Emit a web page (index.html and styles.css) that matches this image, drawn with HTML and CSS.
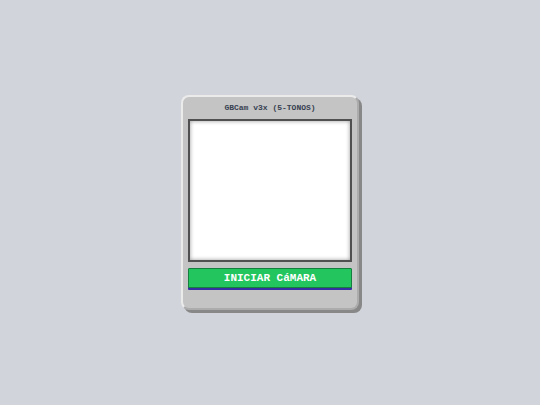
FILE: index.html
```html
<!DOCTYPE html>
<html lang="es">
<head>
    <meta charset="utf-8">
    <meta name="viewport" content="width=device-width, initial-scale=1.0">
    <title>GBCam</title>
    <link rel="stylesheet" href="styles.css">
</head>
<body>
<main class="console">
    <h1 class="title">GBCam v3x (5-TONOS)</h1>
    <canvas class="screen" width="160" height="139"></canvas>
    <button class="btn-start" type="button">INICIAR CáMARA</button>
</main>
</body>
</html>
```

FILE: styles.css
```css
* {
    box-sizing: border-box;
}
body {
    margin: 0;
    min-height: 100vh;
    display: flex;
    align-items: center;
    justify-content: center;
    background-color: #d1d5db;
    font-family: "Liberation Mono", monospace;
}

/* carcasa */
.console {
    display: flex;
    flex-direction: column;
    width: 100%;
    max-width: 178px;
    padding: 6px 5px 20px;
    background: #c4c4c4;
    border: 2px solid;
    border-color: #ebebeb #acacac #acacac #ebebeb;
    border-radius: 8px;
    box-shadow: 3px 3px 0 #888;
}
.title {
    margin: 0 0 6px;
    color: #374151;
    font-size: 8px;
    font-weight: bold;
    line-height: 10px;
    text-align: center;
}

.screen {
    display: block;
    width: 100%;
    border: 2px solid #505050;
    background: #fff;
    box-shadow: inset 0 0 4px rgba(0, 0, 0, 0.4);
}
.btn-start {
    margin: 6px 0 0;
    padding: 3px 0;
    border: 1px solid #15803d;
    border-radius: 1px;
    background: #22c55e;
    box-shadow: 0 2px 0 #3730a3;
    color: #fff;
    font-family: inherit;
    font-size: 11px;
    font-weight: bold;
    line-height: 12px;
    cursor: pointer;
}
.btn-start:active {
    background: #16a34a;
    box-shadow: none;
}
```
